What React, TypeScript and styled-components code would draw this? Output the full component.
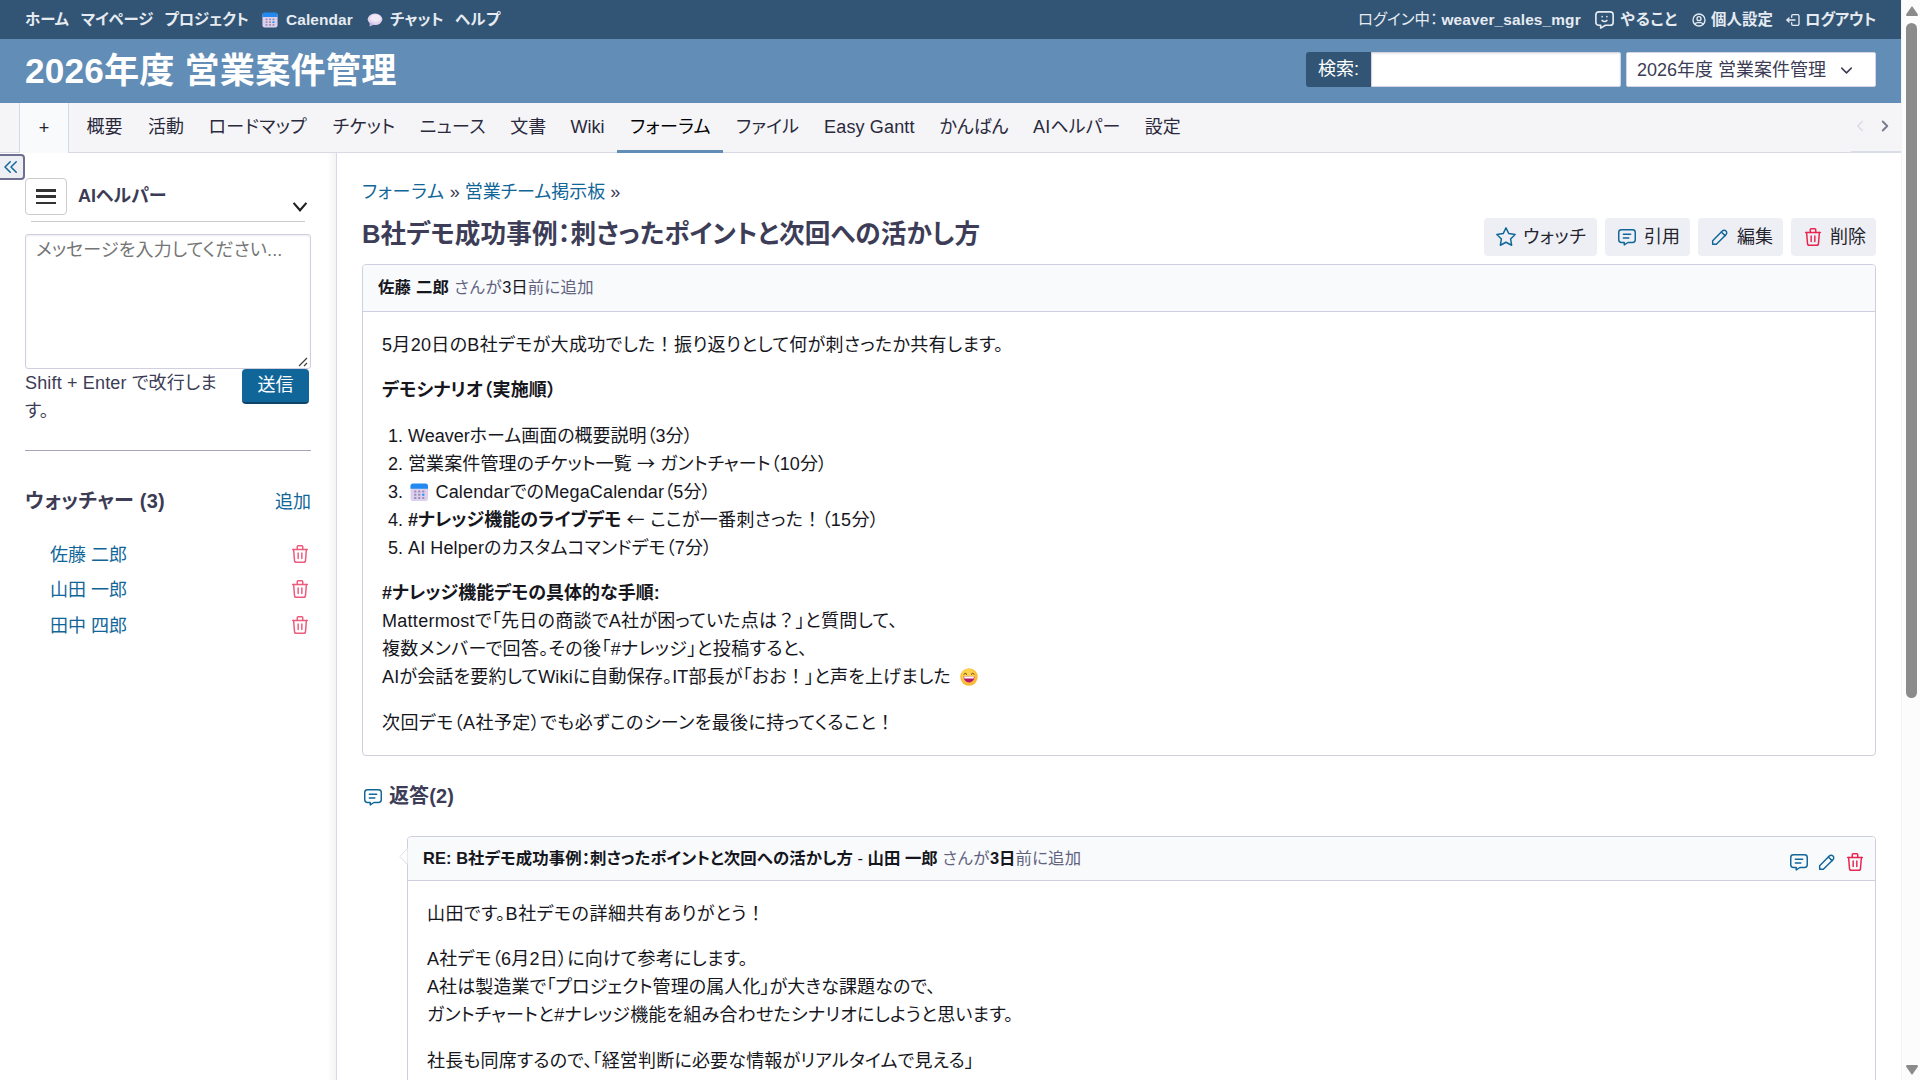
import React from "react";
import styled, { createGlobalStyle, css } from "styled-components";

const GlobalStyle = createGlobalStyle`
  * { box-sizing: border-box; }
  body {
    margin: 0;
    background: #fff;
    color: #16161d;
    font-family: "Liberation Sans", "Noto Sans CJK JP", sans-serif;
    font-size: 18px;
    font-feature-settings: "palt";
    overflow: hidden;
  }
  a { text-decoration: none; color: inherit; }
`;

/* ---------- text ---------- */

const Run = styled.span<{ $ls?: number; $bold?: boolean; $color?: string }>`
  letter-spacing: ${(p) => p.$ls ?? 0}px;
  white-space: nowrap;
  ${(p) => p.$bold && css`font-weight: 700;`}
  ${(p) => p.$color && css`color: ${p.$color};`}
`;

const FullWidth = styled.span`
  font-family: "Noto Sans CJK JP", sans-serif;
  font-feature-settings: normal;
  line-height: 1;
`;

type JpProps = { children: string; ls?: number; bold?: boolean; color?: string };

/* Exclamation marks, question marks and arrows keep their full-width advance. */
const Jp = ({ children, ls, bold, color }: JpProps) => (
  <Run $ls={ls} $bold={bold} $color={color}>
    {children.split(/([！？→←])/).map((part, i) =>
      i % 2 === 1 ? <FullWidth key={i}>{part}</FullWidth> : part
    )}
  </Run>
);

/* ---------- icons ---------- */

const Svg = styled.svg<{ $size: number; $color?: string; $stroke?: number; $faded?: boolean }>`
  width: ${(p) => p.$size}px;
  height: ${(p) => p.$size}px;
  flex: none;
  display: block;
  fill: none;
  stroke: ${(p) => p.$color ?? "#116699"};
  stroke-width: ${(p) => p.$stroke ?? 1.6};
  stroke-linecap: round;
  stroke-linejoin: round;
  opacity: ${(p) => (p.$faded ? 0.75 : 1)};
`;

const shapes = {
  comment: ["M8 9h8", "M8 13h6", "M18 4a3 3 0 0 1 3 3v8a3 3 0 0 1 -3 3h-5l-4 2.6v-2.6h-3a3 3 0 0 1 -3 -3v-8a3 3 0 0 1 3 -3h12z"],
  chatbot: ["M9.5 9h.01", "M14.5 9h.01", "M9.5 13a3.5 3.5 0 0 0 5 0", "M18 4a3 3 0 0 1 3 3v8a3 3 0 0 1 -3 3h-5l-5 3v-3h-2a3 3 0 0 1 -3 -3v-8a3 3 0 0 1 3 -3h12z"],
  pencil: ["M4 20h4l10.5 -10.5a2.828 2.828 0 1 0 -4 -4l-10.5 10.5v4", "M13.5 6.5l4 4"],
  trash: ["M4 7h16", "M10 11v6", "M14 11v6", "M5 7l1 12a2 2 0 0 0 2 2h8a2 2 0 0 0 2 -2l1 -12", "M9 7v-3a1 1 0 0 1 1 -1h4a1 1 0 0 1 1 1v3"],
  star: ["M12 17.75l-6.172 3.245l1.179 -6.873l-5 -4.867l6.9 -1l3.086 -6.253l3.086 6.253l6.9 1l-5 4.867l1.179 6.873z"],
  user: ["M3 12a9 9 0 1 0 18 0a9 9 0 1 0 -18 0", "M9 10a3 3 0 1 0 6 0a3 3 0 1 0 -6 0", "M6.168 18.849a4 4 0 0 1 3.832 -2.849h4a4 4 0 0 1 3.834 2.855"],
  logout: ["M10 8v-2a2 2 0 0 1 2 -2h7a2 2 0 0 1 2 2v12a2 2 0 0 1 -2 2h-7a2 2 0 0 1 -2 -2v-2", "M15 12h-12l3 -3", "M6 15l-3 -3"],
  down: ["M6 9l6 6l6 -6"],
  left: ["M15 6l-6 6l6 6"],
  right: ["M9 6l6 6l-6 6"],
  collapse: ["M11 5l-7 7l7 7", "M19 5l-7 7l7 7"],
};

type IconProps = { name: keyof typeof shapes; size?: number; color?: string; stroke?: number; faded?: boolean };

const Icon = ({ name, size = 22, color, stroke, faded }: IconProps) => (
  <Svg viewBox="0 0 24 24" $size={size} $color={color} $stroke={stroke} $faded={faded}>
    {shapes[name].map((d) => (
      <path key={d} d={d} />
    ))}
  </Svg>
);

const Emoji = styled.svg<{ $size: number; $drop?: number; $mx?: string }>`
  width: ${(p) => p.$size}px;
  height: ${(p) => p.$size}px;
  margin: 0 ${(p) => p.$mx ?? "0"};
  flex: none;
  display: inline-block;
  vertical-align: ${(p) => -(p.$drop ?? 0)}px;
`;

const CalendarEmoji = ({ size, drop, mx }: { size: number; drop?: number; mx?: string }) => (
  <Emoji viewBox="0 0 18 18" $size={size} $drop={drop} $mx={mx}>
    <rect x="0.5" y="1" width="17" height="16.5" rx="2.5" fill="#ddd0ef" />
    <path d="M0.5 5.5V3a2.5 2.5 0 0 1 2.5-2.5h12A2.5 2.5 0 0 1 17.5 3v2.5z" fill="#2189ef" />
    {[7.3, 10.4, 13.5].map((y) =>
      [4, 7.9, 11.8].map((x) => (
        <rect key={`${x}-${y}`} x={x} y={y} width="2.2" height="2" rx="0.4" fill={x > 11 && y > 10 && y < 11 ? "#1f8df5" : "#9a8fb5"} />
      ))
    )}
  </Emoji>
);

const BalloonEmoji = () => (
  <Emoji viewBox="0 0 16 16" $size={16}>
    <ellipse cx="8" cy="7.3" rx="7.3" ry="5.8" fill="#e2d3ee" />
    <path d="M3 10l-.5 4.5 5-2z" fill="#cdb8e4" />
    <ellipse cx="8.5" cy="6.2" rx="5.4" ry="3.6" fill="#f2e9f8" />
  </Emoji>
);

const LaughEmoji = () => (
  <Emoji viewBox="0 0 18 18" $size={18} $drop={3} $mx="4px">
    <circle cx="9" cy="9" r="8.7" fill="#fbb93a" />
    <circle cx="8.4" cy="7.6" r="6.8" fill="#ffd24c" />
    <path d="M3.8 6.2q1.4-2.2 3 0M11.2 6.2q1.4-2.2 3 0" fill="none" stroke="#5b3a2b" strokeWidth="1" strokeLinecap="round" />
    <path d="M3.5 8.6h11a5.5 5.9 0 0 1-11 0z" fill="#b3136a" />
    <path d="M4 8.6h10l-.4 1.8H4.4z" fill="#fff" />
  </Emoji>
);

/* ---------- shell ---------- */

const Screen = styled.div`
  width: 1920px;
  height: 1080px;
  display: flex;
  overflow: hidden;
`;

const Page = styled.div`
  width: 1901px;
  height: 1080px;
  display: flex;
  flex-direction: column;
`;

const ScrollTrack = styled.div`
  width: 19px;
  height: 1080px;
  padding: 6px 3px 5px 4px;
  background: #fcfcfc;
  border-left: 1px solid #f4f4f4;
  display: flex;
  flex-direction: column;
  align-items: center;
`;

const Arrow = styled.svg`
  width: 12px;
  height: 10px;
  flex: none;
  fill: #8b8b8b;
`;

const Thumb = styled.div`
  width: 11px;
  height: 675px;
  margin: 7px 0 auto;
  border-radius: 6px;
  background: #8b8b8b;
`;

/* ---------- top bar ---------- */

const TopBar = styled.div`
  height: 39px;
  padding: 0 25px;
  flex: none;
  display: flex;
  align-items: center;
  background: #325575;
  color: #e6ebf2;
  font-size: 15.4px;
  line-height: 39px;
`;

const TopItem = styled.a<{ $w: number; $gap?: number }>`
  width: ${(p) => p.$w}px;
  display: flex;
  align-items: center;
  gap: ${(p) => p.$gap ?? 8}px;
  white-space: nowrap;
`;

const Spacer = styled.div`
  flex: 1;
`;

const Header = styled.header`
  height: 64px;
  flex: none;
  padding: 13px 25px 0;
  display: flex;
  align-items: flex-start;
  background: #628db6;
`;

const ProjectTitle = styled.h1`
  margin: 0;
  flex: 1;
  font-size: 35.2px;
  line-height: 38px;
  color: #fff;
`;

const SearchLabel = styled.div`
  width: 65px;
  height: 35px;
  padding-left: 12px;
  border-radius: 3px 0 0 3px;
  background: #325575;
  color: #fff;
  line-height: 34px;
`;

const SearchInput = styled.input`
  width: 250px;
  height: 35px;
  border: 1px solid #d5d5e2;
  border-radius: 0 2px 2px 0;
  background: #fff;
  box-shadow: inset 0 1px 2px #e8e8f0;
`;

const ProjectSelect = styled.div`
  width: 250px;
  height: 35px;
  margin-left: 5px;
  padding: 1px 19px 0 10px;
  display: flex;
  align-items: center;
  justify-content: space-between;
  border: 1px solid #d5d5e2;
  border-radius: 2px;
  background: #fff;
  color: #3c3c55;
  line-height: 35px;
`;

/* ---------- tabs ---------- */

const TabBar = styled.nav`
  height: 50px;
  flex: none;
  display: flex;
  padding-left: 19px;
  background: #f5f5f8;
  box-shadow: inset 0 -1px #d9d9e6;
`;

const AddTab = styled.div`
  width: 50px;
  margin-right: 5px;
  border: solid #d9d9e6;
  border-width: 0 1px;
  background: #f8fafc;
  text-align: center;
  line-height: 50px;
  color: #24242f;
`;

const Tab = styled.a<{ $w: number; $active?: boolean }>`
  width: ${(p) => p.$w}px;
  padding-left: 12.6px;
  line-height: 48px;
  white-space: nowrap;
  color: ${(p) => (p.$active ? "#000" : "#2a2a3c")};
  ${(p) => p.$active && css`border-bottom: 3px solid #628db6;`}
`;

const TabArrows = styled.div`
  margin-left: auto;
  width: 50px;
  padding: 0 7px 3px 0;
  display: flex;
  align-items: center;
  justify-content: space-between;
  border-bottom: 2px solid #d9dde6;
`;

/* ---------- sidebar ---------- */

const Body = styled.div`
  flex: 1;
  min-height: 0;
  display: flex;
`;

const Sidebar = styled.aside`
  position: relative;
  width: 337px;
  flex: none;
  padding: 25px 25px 0;
  border-right: 1px solid #d8d8e8;
  background: linear-gradient(to left, #f4f4f6, #fff 9px);
  color: #3c3c55;
`;

const CollapseButton = styled.button`
  position: absolute;
  left: -2px;
  top: 1px;
  width: 27px;
  height: 26px;
  padding: 0 0 0 2px;
  border: 2px solid #6f6f92;
  border-radius: 0 4px 4px 0;
  background: #eeeff4;
`;

const HelperHead = styled.div`
  height: 43px;
  display: flex;
`;

const MenuButton = styled.div`
  width: 42px;
  height: 37px;
  padding: 10px 10px;
  display: flex;
  flex-direction: column;
  justify-content: space-between;
  border: 1px solid #ccc;
  border-radius: 4px;
`;

const MenuBar = styled.span`
  height: 2.5px;
  background: #333;
`;

const HelperTitle = styled.div`
  flex: 1;
  padding-left: 11px;
  line-height: 36px;
`;

const HelperChevron = styled.div`
  padding: 18px 0 0 0;
`;

const ThinRule = styled.div`
  height: 1px;
  margin: 0 6px 12px;
  background: #ccc;
`;

const Message = styled.div`
  height: 135px;
  padding: 1px 10px;
  display: flex;
  justify-content: space-between;
  border: 1px solid #cfcfe0;
  border-radius: 3px;
  box-shadow: inset 0 1px 2px #ececf3;
  background: #fff;
  color: #757575;
  line-height: 29px;
`;

const Grip = styled.svg`
  width: 10px;
  height: 10px;
  margin: 121px -8px 0 0;
  flex: none;
  stroke: #444;
  stroke-width: 1.3;
`;

const SendRow = styled.div`
  height: 81px;
  padding-right: 2px;
  display: flex;
  justify-content: space-between;
  line-height: 28px;
`;

const SendButton = styled.div`
  width: 67px;
  height: 35px;
  text-align: center;
  line-height: 33px;
  border-radius: 4px;
  border-bottom: 2px solid #0d4468;
  background: #116699;
  color: #fff;
`;

const Rule = styled.div`
  height: 1px;
  background: #a5a5bb;
`;

const WatcherHead = styled.div`
  margin-top: 36px;
  height: 30px;
  display: flex;
  justify-content: space-between;
  line-height: 30px;
`;

const WatcherTitle = styled.h3`
  margin: 0;
  font-size: 20px;
  line-height: 28px;
`;

const Watchers = styled.ul`
  margin: 18px 0 0;
  padding: 0 0 0 25px;
  list-style: none;
`;

const Watcher = styled.li`
  height: 35.5px;
  display: flex;
  align-items: center;
  justify-content: space-between;
  color: #116699;

  svg { margin-top: 2px; }
`;

/* ---------- main ---------- */

const Main = styled.main`
  flex: 1;
  padding: 24px 25px 0;
  min-width: 0;
`;

const Breadcrumb = styled.div`
  height: 30px;
  display: flex;
  gap: 5px;
  line-height: 30px;
  color: #3c3c55;
`;

const TitleRow = styled.div`
  height: 57px;
  display: flex;
  justify-content: space-between;
`;

const PostTitle = styled.h2`
  margin: 0;
  font-size: 25.6px;
  line-height: 54px;
  color: #3d3d57;
`;

const Actions = styled.div`
  padding-top: 11px;
  display: flex;
  gap: 8px;
`;

const ActionButton = styled.div<{ $w: number }>`
  width: ${(p) => p.$w}px;
  height: 38px;
  padding-left: 11px;
  display: flex;
  align-items: center;
  gap: 6px;
  border-radius: 4px;
  background: #eeeff4;
  color: #24242f;
  line-height: 36px;
`;

const Card = styled.section<{ $h: number; $indent?: number }>`
  position: relative;
  height: ${(p) => p.$h}px;
  margin-left: ${(p) => p.$indent ?? 0}px;
  border: 1px solid #cfcfe0;
  border-radius: 4px;
  background: #fff;
`;

const CardHead = styled.div<{ $h: number }>`
  height: ${(p) => p.$h}px;
  padding: 0 9.5px 0 15px;
  display: flex;
  gap: 5px;
  border-bottom: 1px solid #cfcfe0;
  border-radius: 3px 3px 0 0;
  background: #f8fafc;
  font-size: 16.4px;
  line-height: ${(p) => p.$h - 2}px;
  color: #16161d;
`;

const HeadIcons = styled.div`
  margin-left: auto;
  padding-top: 7px;
  display: flex;
  align-items: center;
  gap: 6px;
`;

const ReplyPointer = styled.svg`
  position: absolute;
  left: -9px;
  top: 11px;
  width: 9px;
  height: 17px;
  fill: #fff;
  stroke: #dcdce8;
`;

const Content = styled.div`
  padding: 2px 19px;
  line-height: 28px;
`;

const Para = styled.p<{ $mt?: number }>`
  margin: ${(p) => p.$mt ?? 17}px 0 0;
  white-space: nowrap;
`;

const Steps = styled.ol`
  margin: 18px 0 0;
  padding: 0 0 0 26px;

  li { height: 28px; white-space: nowrap; }
`;

const RepliesTitle = styled.h3`
  margin: 26px 0 25px;
  height: 29px;
  display: flex;
  align-items: center;
  gap: 5px;
  font-size: 20px;
  line-height: 29px;
  color: #3d3d57;
`;

const tabs: { label: string; w: number; ls?: number; active?: boolean }[] = [
  { label: "概要", w: 61.5 },
  { label: "活動", w: 60.5 },
  { label: "ロードマップ", w: 124, ls: 0.35 },
  { label: "チケット", w: 87.2, ls: 0.42 },
  { label: "ニュース", w: 90.4, ls: 0.29 },
  { label: "文書", w: 60.4 },
  { label: "Wiki", w: 59.5 },
  { label: "フォーラム", w: 106, ls: 0.45, active: true },
  { label: "ファイル", w: 88, ls: 0.2 },
  { label: "Easy Gantt", w: 115.5, ls: 0.15 },
  { label: "かんばん", w: 93.5, ls: -0.1 },
  { label: "AIヘルパー", w: 111.6, ls: 0.12 },
  { label: "設定", w: 61 },
];

const watchers = ["佐藤 二郎", "山田 一郎", "田中 四郎"];

export default function App() {
  return (
    <Screen lang="ja">
      <GlobalStyle />
      <Page>
        <TopBar>
          <TopItem $w={56}><Jp bold>ホーム</Jp></TopItem>
          <TopItem $w={83.5}><Jp bold ls={-0.15}>マイページ</Jp></TopItem>
          <TopItem $w={97.5}><Jp bold ls={-0.2}>プロジェクト</Jp></TopItem>
          <TopItem $w={105}><CalendarEmoji size={16} /><Jp bold ls={0.12}>Calendar</Jp></TopItem>
          <TopItem $w={88} $gap={7}><BalloonEmoji /><Jp bold ls={0.1}>チャット</Jp></TopItem>
          <TopItem $w={50}><Jp bold ls={0.5}>ヘルプ</Jp></TopItem>
          <Spacer />
          <TopItem $w={83.5}><Jp ls={0.1}>ログイン中：</Jp></TopItem>
          <TopItem $w={151}><Jp bold ls={0.15}>weaver_sales_mgr</Jp></TopItem>
          <TopItem $w={98.5} $gap={5}><Icon name="chatbot" size={23} color="#e6ebf2" stroke={1.7} /><Jp bold ls={0.7}>やること</Jp></TopItem>
          <TopItem $w={94} $gap={4}><Icon name="user" size={16} color="#e6ebf2" stroke={2} /><Jp bold ls={0.1}>個人設定</Jp></TopItem>
          <TopItem $w={91} $gap={4}><Icon name="logout" size={16} color="#e6ebf2" stroke={2} /><Jp bold ls={-0.2}>ログアウト</Jp></TopItem>
        </TopBar>
        <Header>
          <ProjectTitle><Jp ls={0.15}>2026年度 営業案件管理</Jp></ProjectTitle>
          <SearchLabel>検索:</SearchLabel>
          <SearchInput />
          <ProjectSelect>
            <Jp>2026年度 営業案件管理</Jp>
            <Icon name="down" size={19} color="#3c3c55" stroke={1.9} />
          </ProjectSelect>
        </Header>
        <TabBar>
          <AddTab>+</AddTab>
          {tabs.map((t) => (
            <Tab key={t.label} $w={t.w} $active={t.active}><Jp ls={t.ls}>{t.label}</Jp></Tab>
          ))}
          <TabArrows>
            <Icon name="left" size={18} color="#dcdce6" stroke={2.2} />
            <Icon name="right" size={18} color="#7b7b90" stroke={2.6} />
          </TabArrows>
        </TabBar>
        <Body>
          <Sidebar>
            <CollapseButton><Icon name="collapse" size={18} stroke={2} /></CollapseButton>
            <HelperHead>
              <MenuButton><MenuBar /><MenuBar /><MenuBar /></MenuButton>
              <HelperTitle><Jp bold>AIヘルパー</Jp></HelperTitle>
              <HelperChevron>
                <Svg viewBox="0 0 20 24" $size={22} $color="#222" $stroke={2.4}>
                  <path d="M3 7.5l7 8l7 -8" strokeLinecap="butt" strokeLinejoin="miter" />
                </Svg>
              </HelperChevron>
            </HelperHead>
            <ThinRule />
            <Message>
              <Jp ls={0.15}>メッセージを入力してください...</Jp>
              <Grip viewBox="0 0 10 10"><path d="M1 9L9 1M6 9L9 6" /></Grip>
            </Message>
            <SendRow>
              <div><Jp ls={0.16}>Shift + Enter で改行しま</Jp><br />す。</div>
              <SendButton>送信</SendButton>
            </SendRow>
            <Rule />
            <WatcherHead>
              <WatcherTitle><Jp ls={0.25}>ウォッチャー (3)</Jp></WatcherTitle>
              <Jp color="#116699">追加</Jp>
            </WatcherHead>
            <Watchers>
              {watchers.map((name) => (
                <Watcher key={name}><Jp>{name}</Jp><Icon name="trash" size={22} color="#e8244f" faded /></Watcher>
              ))}
            </Watchers>
          </Sidebar>
          <Main>
            <Breadcrumb>
              <Jp color="#116699" ls={0.8}>フォーラム</Jp>»<Jp color="#116699">営業チーム掲示板</Jp>»
            </Breadcrumb>
            <TitleRow>
              <PostTitle><Jp ls={0.1}>B社デモ成功事例：刺さったポイントと次回への活かし方</Jp></PostTitle>
              <Actions>
                <ActionButton $w={113}><Icon name="star" /><Jp ls={0.6}>ウォッチ</Jp></ActionButton>
                <ActionButton $w={85}><Icon name="comment" /><Jp>引用</Jp></ActionButton>
                <ActionButton $w={85}><Icon name="pencil" /><Jp>編集</Jp></ActionButton>
                <ActionButton $w={85}><Icon name="trash" color="#e8244f" /><Jp>削除</Jp></ActionButton>
              </Actions>
            </TitleRow>
            <Card $h={492}>
              <CardHead $h={47}>
                <Jp bold ls={0.2}>佐藤 二郎</Jp>
                <span>
                  <Jp color="#62627f" ls={0.7}>さんが</Jp><Jp>3日</Jp><Jp color="#62627f" ls={0.3}>前に追加</Jp>
                </span>
              </CardHead>
              <Content>
                <Para><Jp ls={0.33}>5月20日のB社デモが大成功でした！振り返りとして何が刺さったか共有します。</Jp></Para>
                <Para><Jp bold ls={0.2}>デモシナリオ（実施順）</Jp></Para>
                <Steps>
                  <li><Jp>Weaverホーム画面の概要説明（3分）</Jp></li>
                  <li><Jp ls={0.1}>営業案件管理のチケット一覧 → ガントチャート（10分）</Jp></li>
                  <li><CalendarEmoji size={18.5} drop={3} mx="2px" />{" "}<Jp ls={0.16}>CalendarでのMegaCalendar（5分）</Jp></li>
                  <li><Jp bold>#ナレッジ機能のライブデモ</Jp><Jp ls={0.3}>{" ← ここが一番刺さった！（15分）"}</Jp></li>
                  <li><Jp ls={0.12}>AI Helperのカスタムコマンドデモ（7分）</Jp></li>
                </Steps>
                <Para $mt={17}>
                  <Jp bold>#ナレッジ機能デモの具体的な手順:</Jp><br />
                  <Jp ls={0.28}>Mattermostで「先日の商談でA社が困っていた点は？」と質問して、</Jp><br />
                  <Jp ls={0.36}>複数メンバーで回答。その後「#ナレッジ」と投稿すると、</Jp><br />
                  <Jp ls={0.17}>AIが会話を要約してWikiに自動保存。IT部長が「おお！」と声を上げました</Jp>{" "}<LaughEmoji />
                </Para>
                <Para $mt={18}><Jp ls={0.42}>次回デモ（A社予定）でも必ずこのシーンを最後に持ってくること！</Jp></Para>
              </Content>
            </Card>
            <RepliesTitle><Icon name="comment" /><Jp ls={0.1}>返答(2)</Jp></RepliesTitle>
            <Card $h={460} $indent={45}>
              <ReplyPointer viewBox="0 0 9 17"><path d="M8.5 .5L1 8.500l7.500 8" /></ReplyPointer>
              <CardHead $h={44}>
                <span>
                  <Jp bold ls={0.1}>RE: B社デモ成功事例：刺さったポイントと次回への活かし方</Jp>
                  {" - "}
                  <Jp bold>山田 一郎</Jp>{" "}
                  <Jp color="#62627f" ls={0.6}>さんが</Jp><Jp bold>3日</Jp><Jp color="#62627f" ls={0.2}>前に追加</Jp>
                </span>
                <HeadIcons>
                  <Icon name="comment" />
                  <Icon name="pencil" />
                  <Icon name="trash" color="#e8244f" />
                </HeadIcons>
              </CardHead>
              <Content>
                <Para><Jp ls={0.5}>山田です。B社デモの詳細共有ありがとう！</Jp></Para>
                <Para>
                  <Jp ls={0.22}>A社デモ（6月2日）に向けて参考にします。</Jp><br />
                  <Jp ls={0.1}>A社は製造業で「プロジェクト管理の属人化」が大きな課題なので、</Jp><br />
                  <Jp ls={0.22}>ガントチャートと#ナレッジ機能を組み合わせたシナリオにしようと思います。</Jp>
                </Para>
                <Para $mt={18}>
                  <Jp ls={0.18}>社長も同席するので、「経営判断に必要な情報がリアルタイムで見える」</Jp>
                </Para>
                <Para $mt={2}><Jp>という点を強調します。</Jp></Para>
              </Content>
            </Card>
          </Main>
        </Body>
      </Page>
      <ScrollTrack>
        <Arrow viewBox="0 0 12 10"><path d="M6 0L12 8.500Q12 10 11 10H1Q0 10 0 8.500z" /></Arrow>
        <Thumb />
        <Arrow viewBox="0 0 12 10"><path d="M6 10L12 1.500Q12 0 11 0H1Q0 0 0 1.500z" /></Arrow>
      </ScrollTrack>
    </Screen>
  );
}
